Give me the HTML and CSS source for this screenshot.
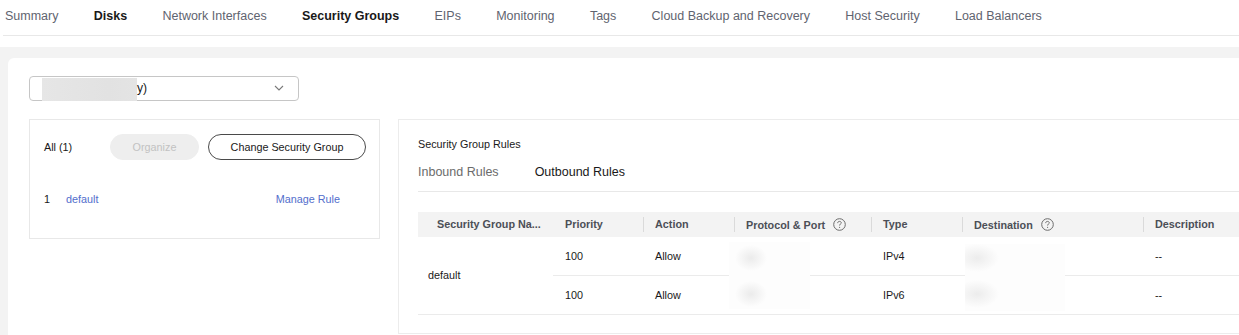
FILE: index.html
```html
<!DOCTYPE html>
<html lang="en">
<head>
<meta charset="utf-8">
<title>Security Groups</title>
<link rel="stylesheet" href="styles.css">
</head>
<body>
<nav class="tabs">
  <span class="tab">Summary</span>
  <span class="tab tab-strong">Disks</span>
  <span class="tab">Network Interfaces</span>
  <span class="tab tab-strong">Security Groups</span>
  <span class="tab">EIPs</span>
  <span class="tab">Monitoring</span>
  <span class="tab">Tags</span>
  <span class="tab">Cloud Backup and Recovery</span>
  <span class="tab">Host Security</span>
  <span class="tab">Load Balancers</span>
</nav>
<main class="page">
  <section class="card">
    <div class="select">
      <span class="select-mask"></span>
      <span class="select-text">y)</span>
      <svg class="chevron" width="10" height="6" viewBox="0 0 10 6"><path d="M1 1 L5 5 L9 1" fill="none" stroke="#7a7a7a" stroke-width="1.1"/></svg>
    </div>
    <div class="panels">
      <div class="sg-list">
        <div class="sg-toolbar">
          <span class="sg-all">All (1)</span>
          <button class="btn btn-disabled">Organize</button>
          <button class="btn btn-outline">Change Security Group</button>
        </div>
        <div class="sg-row">
          <span class="sg-index">1</span>
          <a class="link sg-name">default</a>
          <a class="link sg-manage">Manage Rule</a>
        </div>
      </div>
      <div class="rules">
        <div class="rules-title">Security Group Rules</div>
        <div class="rules-tabs">
          <span class="rtab">Inbound Rules</span>
          <span class="rtab rtab-active">Outbound Rules</span>
        </div>
        <div class="table-wrap">
          <table class="rules-table">
            <colgroup>
              <col class="c1"><col class="c2"><col class="c3"><col class="c4"><col class="c5"><col class="c6"><col class="c7">
            </colgroup>
            <thead>
              <tr>
                <th class="th-first">Security Group Na...</th>
                <th>Priority</th>
                <th class="sep">Action</th>
                <th class="sep">Protocol &amp; Port<svg class="help" width="13" height="13" viewBox="0 0 13 13"><circle cx="6.5" cy="6.5" r="5.8" fill="none" stroke="#6b6b6b" stroke-width="1"/><path d="M4.7 5.1 C4.7 3.9 5.5 3.4 6.5 3.4 C7.5 3.4 8.3 4 8.3 4.9 C8.3 5.9 6.6 6.1 6.6 7.5" fill="none" stroke="#6b6b6b" stroke-width="1"/><circle cx="6.6" cy="9.3" r="0.6" fill="#6b6b6b"/></svg></th>
                <th class="sep">Type</th>
                <th class="sep">Destination<svg class="help" width="13" height="13" viewBox="0 0 13 13"><circle cx="6.5" cy="6.5" r="5.8" fill="none" stroke="#6b6b6b" stroke-width="1"/><path d="M4.7 5.1 C4.7 3.9 5.5 3.4 6.5 3.4 C7.5 3.4 8.3 4 8.3 4.9 C8.3 5.9 6.6 6.1 6.6 7.5" fill="none" stroke="#6b6b6b" stroke-width="1"/><circle cx="6.6" cy="9.3" r="0.6" fill="#6b6b6b"/></svg></th>
                <th class="sep">Description</th>
              </tr>
            </thead>
            <tbody>
              <tr>
                <td class="td-first" rowspan="2">default</td>
                <td>100</td>
                <td>Allow</td>
                <td></td>
                <td>IPv4</td>
                <td></td>
                <td>--</td>
              </tr>
              <tr>
                <td>100</td>
                <td>Allow</td>
                <td></td>
                <td>IPv6</td>
                <td></td>
                <td>--</td>
              </tr>
            </tbody>
          </table>
          <div class="redact redact-proto"></div>
          <div class="redact redact-dest"></div>
        </div>
      </div>
    </div>
  </section>
</main>
</body>
</html>
```
FILE: styles.css
```css
* { box-sizing: border-box; }
html, body {
  margin: 0;
  padding: 0;
  background: #ffffff;
  overflow: hidden;
  width: 1239px;
  height: 335px;
}
body {
  font-family: "Liberation Sans", Arial, sans-serif;
  color: #191919;
}

.tabs {
  display: flex;
  gap: 35.3px;
  margin-left: 3px;
  padding-left: 2px;
  height: 36px;
  border-bottom: 1px solid #e8e8e8;
  font-size: 12.5px;
  line-height: 32px;
  white-space: nowrap;
}
.tab { color: #5f6470; }
.tab-strong { color: #191919; font-weight: bold; }

.page {
  margin-top: 11px;
  background: #f3f3f3;
  padding: 11px 0 0 8px;
  height: 288px;
}
.card {
  background: #ffffff;
  border-radius: 6px 0 0 0;
  padding: 18px 0 0 21px;
  height: 277px;
  overflow: hidden;
}

.select {
  display: flex;
  align-items: flex-start;
  width: 270px;
  height: 25px;
  border: 1px solid #c6c6c6;
  border-radius: 4px;
  padding: 0 14px 0 12px;
}
.select-mask {
  display: block;
  width: 95px;
  height: 23px;
  margin-top: 1px;
  margin-bottom: -1px;
  background: linear-gradient(90deg, #e6e6e6, #e2e2e2 70%, #e4e4e4);
}
.select-text {
  font-size: 12.2px;
  line-height: 23px;
  color: #191919;
}
.chevron {
  margin-left: auto;
  margin-top: 8px;
}

.panels {
  display: flex;
  gap: 18px;
  margin-top: 18px;
  align-items: flex-start;
}

.sg-list {
  width: 351px;
  height: 120px;
  border: 1px solid #e8e8e8;
  padding: 14px 13px 0 14px;
  font-size: 10.8px;
}
.sg-toolbar {
  display: flex;
  align-items: center;
  height: 26px;
}
.sg-all { width: 66px; color: #191919; }
.btn {
  font-family: "Liberation Sans", Arial, sans-serif;
  font-size: 10.8px;
  height: 26px;
  border-radius: 13px;
  padding: 0;
}
.btn-disabled {
  width: 89px;
  background: #eeeeee;
  border: 1px solid #eeeeee;
  color: #c2c2c2;
}
.btn-outline {
  width: 158px;
  margin-left: 9px;
  background: #ffffff;
  border: 1px solid #4a4a4a;
  color: #191919;
}
.sg-row {
  display: flex;
  align-items: center;
  margin-top: 27px;
  height: 24px;
}
.sg-index { width: 22px; color: #191919; }
.link { color: #526ecc; cursor: pointer; }
.sg-manage { margin-left: auto; margin-right: 26px; }

.rules {
  flex: 1;
  min-width: 0;
  height: 215px;
  border: 1px solid #ececec;
  border-right: none;
  padding: 16px 0 0 19px;
  overflow: hidden;
}
.rules-title {
  font-size: 10.8px;
  line-height: 16px;
  color: #191919;
}
.rules-tabs {
  display: flex;
  gap: 36px;
  margin-top: 10px;
  height: 30px;
  border-bottom: 1px solid #e8e8e8;
  font-size: 12.5px;
  line-height: 20px;
}
.rtab { color: #6b6b6b; }
.rtab-active { color: #191919; }

.table-wrap {
  position: relative;
  margin-top: 20px;
  overflow: hidden;
}
.rules-table {
  border-collapse: collapse;
  table-layout: fixed;
  width: 866px;
  font-size: 10.8px;
}
.c1 { width: 135px; }
.c2 { width: 90px; }
.c3 { width: 91px; }
.c4 { width: 137px; }
.c5 { width: 91px; }
.c6 { width: 181px; }
.c7 { width: 141px; }

.rules-table th {
  background: #f3f3f3;
  height: 25px;
  padding: 0 6px 1px 12px;
  text-align: left;
  font-weight: bold;
  color: #4c4f57;
  white-space: nowrap;
  position: relative;
}
.rules-table th.th-first { padding: 0 4px 1px 19px; }
.rules-table th.sep::before {
  content: "";
  position: absolute;
  left: 0;
  top: 5px;
  width: 1px;
  height: 15px;
  background: #dadada;
}
.help {
  vertical-align: -2px;
  margin-left: 8px;
}

.rules-table td {
  height: 38px;
  padding: 0 8px 0 12px;
  border-bottom: 1px solid #ebebeb;
  color: #191919;
  vertical-align: middle;
}
.rules-table tbody tr:last-child td { height: 39px; padding-top: 1px; }
.rules-table td.td-first { padding-left: 10px; }

.redact {
  position: absolute;
  top: 30px;
  height: 67px;
}
.redact-proto {
  left: 311px;
  width: 81px;
  background:
    radial-gradient(ellipse 16px 13px at 22px 16px, #ebebeb, rgba(255,255,255,0)),
    radial-gradient(ellipse 16px 13px at 22px 52px, #ebebeb, rgba(255,255,255,0)),
    #fdfdfd;
}
.redact-dest {
  left: 547px;
  top: 32px;
  width: 100px;
  background:
    radial-gradient(ellipse 22px 14px at 12px 14px, #ececec, rgba(255,255,255,0)),
    radial-gradient(ellipse 22px 14px at 12px 50px, #ececec, rgba(255,255,255,0)),
    #fdfdfd;
}
```
